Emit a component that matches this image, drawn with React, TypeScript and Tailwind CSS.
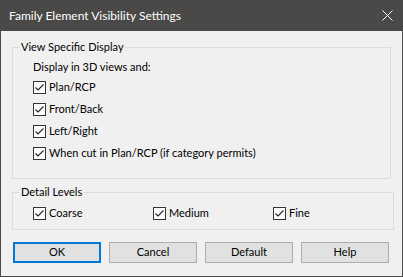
import React from "react";

const font = { fontFamily: 'Lato, "Noto Sans", sans-serif' };

function Check({ label }: { label: string }) {
  return (
    <div className="flex h-[22px] items-center">
      <div className="flex h-[13px] w-[13px] items-center justify-center border border-[#333333] bg-white">
        <svg width="11" height="11" viewBox="0 0 11 11">
          <path d="M1.5 5.5 L4 8 L9.5 2.5" fill="none" stroke="#222" strokeWidth="1.1" />
        </svg>
      </div>
      <span className="ml-[3px] text-[11px] leading-[16px] text-black">{label}</span>
    </div>
  );
}

function Btn({ label, primary }: { label: string; primary?: boolean }) {
  return (
    <div
      className={
        "flex h-[21px] w-[88px] items-center justify-center bg-[#e1e1e1] text-[11px] text-black " +
        (primary ? "border-2 border-[#0078d7]" : "border border-[#adadad]")
      }
    >
      {label}
    </div>
  );
}

export default function App() {
  return (
    <div style={font} className="flex h-[277px] w-[403px] flex-col border-x border-b border-[#4a4947] bg-[#f0f0f0]">
      <div className="-mx-px flex h-[31px] shrink-0 items-center justify-between bg-[#4a4947] pl-[9px] pr-[10px]">
        <span className="text-[12px] text-white">Family Element Visibility Settings</span>
        <svg width="11" height="11" viewBox="0 0 11 11">
          <path d="M0.5 0.5 L10.5 10.5 M10.5 0.5 L0.5 10.5" stroke="#ffffff" strokeWidth="1" />
        </svg>
      </div>

      <fieldset className="mx-[11px] mt-[8px] h-[140px] border border-[#dcdcdc]">
        <legend className="ml-[7px] px-[1px] text-[11px] leading-[16px] text-black">View Specific Display</legend>
        <div className="pl-[20px] pt-[4px]">
          <div className="h-[17px] text-[11px] leading-[16px] text-black">Display in 3D views and:</div>
          <Check label="Plan/RCP" />
          <Check label="Front/Back" />
          <Check label="Left/Right" />
          <Check label="When cut in Plan/RCP (if category permits)" />
        </div>
      </fieldset>

      <fieldset className="mx-[11px] mt-[5px] h-[46px] border border-[#dcdcdc]">
        <legend className="ml-[7px] px-[1px] text-[11px] leading-[16px] text-black">Detail Levels</legend>
        <div className="mt-[2px] flex pl-[20px]">
          <div className="w-[120px]"><Check label="Coarse" /></div>
          <div className="w-[120px]"><Check label="Medium" /></div>
          <div className="w-[120px]"><Check label="Fine" /></div>
        </div>
      </fieldset>

      <div className="mx-[12px] mt-[12px] flex justify-between pr-[1px]">
        <Btn label="OK" primary />
        <Btn label="Cancel" />
        <Btn label="Default" />
        <Btn label="Help" />
      </div>
    </div>
  );
}
